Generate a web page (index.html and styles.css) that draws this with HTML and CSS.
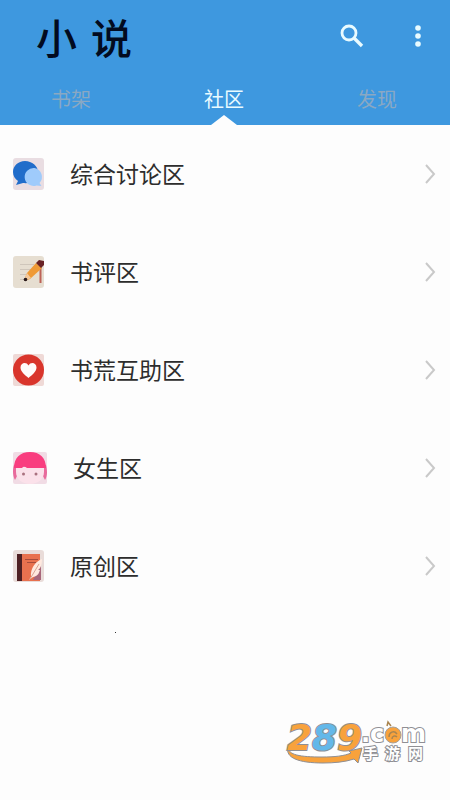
FILE: index.html
```html
<!DOCTYPE html>
<html lang="zh-CN">
<head>
<meta charset="utf-8">
<meta name="viewport" content="width=device-width, initial-scale=1">
<title>小说</title>
<link rel="stylesheet" href="styles.css">
</head>
<body>
<header class="header">
  <div class="bar">
    <h1 class="brand"><span>小</span><span>说</span></h1>
    <div class="actions">
      <button class="action" type="button" aria-label="搜索">
        <svg width="24" height="24" viewBox="0 0 24 24" fill="none" stroke="#e9fbff"><circle cx="9" cy="9" r="7" stroke-width="2.8"/><path d="M14 14l8 8" stroke-width="3.4"/></svg>
      </button>
      <button class="action" type="button" aria-label="更多">
        <svg width="24" height="24" viewBox="0 0 24 24" fill="#e9fbff"><circle cx="12" cy="4" r="2.8"/><circle cx="12" cy="12" r="2.8"/><circle cx="12" cy="20" r="2.8"/></svg>
      </button>
    </div>
  </div>
  <nav class="tabs">
    <a class="tab" href="#shelf">书架</a>
    <a class="tab active" href="#community" aria-current="page">社区</a>
    <a class="tab" href="#discover">发现</a>
  </nav>
</header>
<main>
  <ul class="list">
    <li><a class="row" href="#general">
      <svg width="31" height="32" viewBox="0 0 31 32"><rect width="31" height="32" rx="3" fill="#e9dde2"/><path d="M12 3C5 3 0 8 0 14c0 4 2 7 5 9l-2 4 7-2c8 1 15-3 15-11C25 8 19 3 12 3z" fill="#216dca"/><path d="M21.500 10a9 9 0 1 0 2 17.500l5 .5-2-3A9 9 0 0 0 21.500 10z" fill="#9fcbfb"/></svg>
      <span class="label">综合讨论区</span>
      <svg class="chevron" width="12" height="22" viewBox="0 0 12 22"><path d="M2 2l8 9-8 9"/></svg>
    </a></li>
    <li><a class="row" href="#reviews">
      <svg width="31" height="32" viewBox="0 0 31 32"><rect width="31" height="32" rx="3" fill="#e6ded1"/><path d="M7 8.500h14M7 13.500h11M7 18.500h7M7 23.500h5" stroke="#cfc6bb"/><path d="M27.500 9v18" stroke="#bd6257" stroke-width="2"/><path d="M23 7l6 5-12 11-5 2-1-1 3-7z" fill="#ef9a36"/><path d="M14 17l4 5-6 3-1-1z" fill="#f3c89b"/><circle cx="12.500" cy="23.500" r="1.800" fill="#26191c"/><path d="M23 7l3-3 5 1v4l-3 3z" fill="#692225"/></svg>
      <span class="label">书评区</span>
      <svg class="chevron" width="12" height="22" viewBox="0 0 12 22"><path d="M2 2l8 9-8 9"/></svg>
    </a></li>
    <li><a class="row" href="#help">
      <svg width="31" height="32" viewBox="0 0 31 32"><rect width="31" height="32" rx="2" fill="#efd9d6"/><circle cx="15.500" cy="16" r="15.500" fill="#d9352c"/><path d="M15.500 24C12 21 7.500 17.500 7.500 13.500c0-5 6-6 8-2 2-4 8-3 8 2 0 4-4.500 7.500-8 10.500z" fill="#fffafa"/></svg>
      <span class="label">书荒互助区</span>
      <svg class="chevron" width="12" height="22" viewBox="0 0 12 22"><path d="M2 2l8 9-8 9"/></svg>
    </a></li>
    <li><a class="row" href="#girls">
      <svg width="34" height="32" viewBox="0 0 34 32"><rect width="34" height="32" rx="2" fill="#f1dce5"/><path d="M2 28C-1 22 0 16 1 13h32c1 4 2 10-1 15l-3-6H5z" fill="#e86a9c"/><path d="M3 15h28v5c0 7-6 12-14 12S3 27 3 20z" fill="#fbe1ea"/><path d="M1 16C1 6 7 0 17 0s16 6 16 16H14l-3-2-2 2z" fill="#f93d7f"/><circle cx="10.500" cy="22" r="1.500" fill="#a9717f"/><circle cx="23" cy="22" r="1.500" fill="#a9717f"/></svg>
      <span class="label">女生区</span>
      <svg class="chevron" width="12" height="22" viewBox="0 0 12 22"><path d="M2 2l8 9-8 9"/></svg>
    </a></li>
    <li><a class="row" href="#original">
      <svg width="31" height="32" viewBox="0 0 31 32"><rect width="31" height="32" rx="3" fill="#e9dcd9"/><path d="M4 4h23v27H4z" fill="#e8714f"/><path d="M4 4h5v27H4z" fill="#4e2023"/><path d="M12 9.500h13M14 12.500h9" stroke="#a64c3c"/><path d="M28 13v17h-8z" fill="#a8677b"/><path d="M29 9c-6 2-12 9-11 18l-2 3 4-3c6-1 6-5 7-7l-2 0c3-2 4-6 4-11z" fill="#ffe9df"/><path d="M26 14l-9 15" stroke="#d9a493"/></svg>
      <span class="label">原创区</span>
      <svg class="chevron" width="12" height="22" viewBox="0 0 12 22"><path d="M2 2l8 9-8 9"/></svg>
    </a></li>
  </ul>
  <div class="end-mark"></div>
</main>
<svg class="watermark" width="144" height="44" viewBox="0 0 144 44" role="img" aria-label="289.com 手游网">
  <path d="M2 25c0 8 12 10 34 10 13 0 22-1 29-4l-2-2 13-3-4 15-4-4c-9 3-20 4-31 4C13 41-1 36 2 25z" fill="#f8a23c" stroke="#8f8f94"/>
  <g class="digits"><text x="1" y="28" fill="#f8a23c">2</text><text x="26" y="28" fill="#63b8e9">8</text><text x="51" y="28" fill="#f8a23c">9</text></g>
  <g class="domain"><text x="75" y="20">.c</text><text x="115" y="20">m</text></g>
  <circle cx="107" cy="13" r="8" fill="#f8a23c" stroke="#a5a09a"/>
  <path d="M101 4l1-4 3 4M103 15c0-5 5-7 8-3M106 17c0-3 3-4 5-2" fill="none" stroke="#a98550" stroke-width="1.500"/>
  <g class="caption"><text x="77" y="37">手</text><text x="99" y="37">游</text><text x="122" y="37">网</text></g>
</svg>
</body>
</html>
```
FILE: styles.css
```css
* {
  box-sizing: border-box;
}

body {
  margin: 0;
  min-height: 100vh;
  position: relative;
  background: #fdfdfd;
  color: #2d2d2d;
  font-family: "Noto Sans CJK SC", sans-serif;
}

.header {
  background: #3e98df;
}

.bar {
  display: flex;
  align-items: center;
  justify-content: space-between;
  height: 72px;
  padding: 0 20px 0 36px;
}

.brand {
  display: flex;
  gap: 14px;
  margin: 0;
  color: #020b20;
  font-size: 41px;
  font-weight: 500;
  line-height: 60px;
}

.actions {
  display: flex;
  gap: 42px;
}

.action {
  display: flex;
  padding: 0;
  border: 0;
  background: none;
}

.tabs {
  display: flex;
  justify-content: space-between;
  height: 53px;
  padding: 0 53px 0 51px;
}

.tab {
  position: relative;
  color: #8aa8c3;
  font-size: 20px;
  line-height: 54px;
  text-decoration: none;
}

.active {
  color: #e9fbff;
}

.active::after {
  content: "";
  position: absolute;
  bottom: 0;
  left: 50%;
  border: 13px solid transparent;
  border-top: 0;
  border-bottom: 10px solid #fdfdfd;
  transform: translateX(-50%);
}

.list {
  margin: 0;
  padding: 0;
  list-style: none;
}

.row {
  display: flex;
  align-items: center;
  gap: 26px;
  height: 98px;
  padding: 0 14px 0 13px;
  color: inherit;
  font-size: 23px;
  text-decoration: none;
}

.label {
  padding-bottom: 2px;
}

.chevron {
  margin-left: auto;
  fill: none;
  stroke: #c9c9c9;
  stroke-width: 2;
}

.end-mark {
  width: 1px;
  height: 1px;
  margin: 17px 0 0 115px;
  background: #333333;
}

.watermark {
  position: absolute;
  right: 20px;
  bottom: 34px;
  overflow: visible;
  font-weight: 700;
}

.watermark text {
  paint-order: stroke;
  stroke: #8f8f94;
  stroke-width: 2px;
}

.digits {
  font-family: "DejaVu Sans", sans-serif;
  font-size: 36px;
  font-style: italic;
}

.domain {
  fill: #ffffff;
  font-family: "DejaVu Sans", sans-serif;
  font-size: 24px;
}

.caption {
  fill: #ffffff;
  font-size: 15px;
}
```
